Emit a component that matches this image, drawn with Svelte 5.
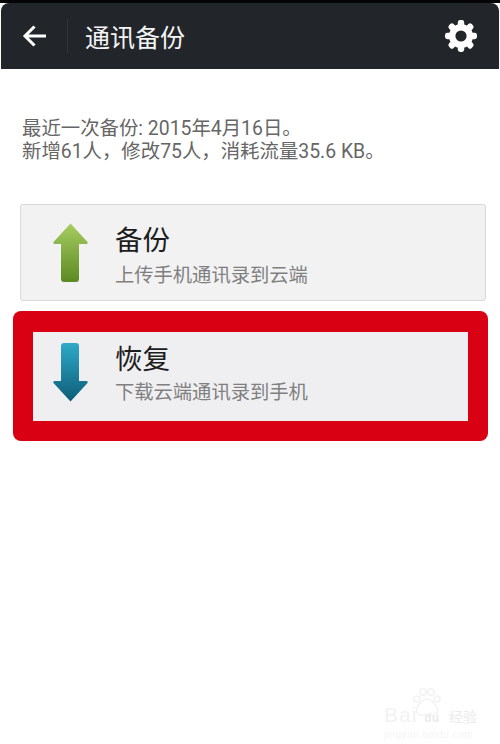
<script>
  const teeth = [0, 45, 90, 135, 180, 225, 270, 315];
  const toes = [
    [5, 14, 3],
    [11, 7, 3.2],
    [19, 7, 3.2],
    [25, 14, 3],
  ];
</script>

<div class="screen">
  <header class="bar">
    <div class="back">
      <svg width="26" height="24" viewBox="0 0 26 24" fill="none" stroke="#fff" stroke-width="3" aria-hidden="true">
        <path d="M24 12H3M12.500 2.500L3 12l9.500 9.500" />
      </svg>
    </div>
    <h1>通讯备份</h1>
    <svg class="gear" width="34" height="34" viewBox="0 0 34 34" aria-hidden="true">
      {#each teeth as a}
        <rect x="13.800" y="1" width="6.400" height="8" rx="2.400" fill="#fff" transform="rotate({a} 17 17)" />
      {/each}
      <circle cx="17" cy="17" r="8.800" fill="none" stroke="#fff" stroke-width="6.400" />
    </svg>
  </header>

  <main class="content">
    <p class="summary">
      最近一次备份: 2015年4月16日。<br />
      新增61人，修改75人，消耗流量35.6 KB。
    </p>

    <section class="card">
      <svg class="arrow" width="35" height="59" viewBox="0 0 35 59" aria-hidden="true">
        <defs>
          <linearGradient id="up" x1="0" y1="0" x2="0" y2="1">
            <stop offset="0" stop-color="#a6cd62" />
            <stop offset="1" stop-color="#5c8a22" />
          </linearGradient>
        </defs>
        <path
          d="M17.500 0.500 L34.500 19 Q35.500 21 33 21 H26 V56 Q26 59 23 59 H11 Q8 59 8 56 V21 H2 Q-0.500 21 0.500 19 Z"
          fill="url(#up)"
        />
      </svg>
      <div class="label">
        <h2>备份</h2>
        <p>上传手机通讯录到云端</p>
      </div>
    </section>

    <div class="highlight">
      <section class="card inner">
        <svg class="arrow" width="35" height="59" viewBox="0 0 35 59" aria-hidden="true">
          <defs>
            <linearGradient id="down" x1="0" y1="0" x2="0" y2="1">
              <stop offset="0" stop-color="#2eaac8" />
              <stop offset="1" stop-color="#0e5c78" />
            </linearGradient>
          </defs>
          <path
            d="M17.500 58.500 L34.500 40 Q35.500 38 33 38 H26 V3 Q26 0 23 0 H11 Q8 0 8 3 V38 H2 Q-0.500 38 0.500 40 Z"
            fill="url(#down)"
          />
        </svg>
        <div class="label">
          <h2>恢复</h2>
          <p>下载云端通讯录到手机</p>
        </div>
      </section>
    </div>
  </main>

  <div class="watermark">
    <svg class="paw" width="30" height="34" viewBox="0 0 30 34" fill="none" stroke="#f3f3f3" stroke-width="1.500" aria-hidden="true">
      {#each toes as [cx, cy, r]}
        <circle {cx} {cy} {r} />
      {/each}
      <path d="M15 14c5 0 8 5 10 9 2 5-2 8-6 7-3-1-5-1-8 0-4 1-8-2-6-7 2-4 5-9 10-9z" />
    </svg>
    <span class="brand"><span>Bai</span><b>du</b><span class="cn">经验</span></span>
    <span class="url">jingyan.baidu.com</span>
  </div>
</div>

<style>
  :global(body) {
    background: #fff;
  }

  .screen {
    position: relative;
    width: 500px;
    height: 744px;
    overflow: hidden;
    background: #fff;
    font-family: "Roboto", "Noto Sans CJK SC", sans-serif;
    border-top: 3px solid #050505;
    box-sizing: border-box;
  }

  .bar {
    display: flex;
    align-items: center;
    height: 66px;
    margin: 0 1px;
    padding-right: 21px;
    background: #22262b;
    border-radius: 8px 8px 0 0;
  }

  .back {
    display: flex;
    align-items: center;
    width: 67px;
    height: 34px;
    padding-left: 21px;
    box-sizing: border-box;
    border-right: 1px solid #2f343a;
  }

  h1 {
    flex: 1;
    margin: 0 0 0 17px;
    font-size: 25px;
    font-weight: 400;
    color: #f4f4f4;
  }

  .content {
    display: flex;
    flex-direction: column;
  }

  .summary {
    margin: 48px 0 0 22px;
    font-size: 19.4px;
    line-height: 23px;
    color: #666;
  }

  .card {
    display: flex;
    align-items: center;
    gap: 27px;
    width: 466px;
    height: 97px;
    margin: 41px 0 0 20px;
    padding-left: 32px;
    box-sizing: border-box;
    background: #f2f2f3;
    border: 1px solid #d9d9d9;
    border-radius: 3px;
  }

  .highlight {
    width: 475px;
    height: 130px;
    margin: 10px 0 0 13px;
    padding: 21px 20px 20px;
    box-sizing: border-box;
    background: #d80012;
    border-radius: 8px;
  }

  .inner {
    width: 435px;
    height: 89px;
    margin: 0;
    padding-left: 20px;
    background: #efeff2;
    border: none;
    border-radius: 0;
  }

  .arrow {
    flex: none;
  }

  .inner .arrow {
    margin-bottom: 8px;
  }

  .label {
    margin-top: 6px;
  }

  .inner .label {
    margin-top: 0;
    margin-bottom: 5px;
  }

  h2 {
    margin: 0;
    font-size: 27.5px;
    line-height: 34px;
    font-weight: 400;
    color: #1d1d1d;
  }

  .label p {
    margin: 6px 0 0;
    font-size: 19.3px;
    line-height: 24px;
    color: #808080;
  }

  .inner .label p {
    margin-top: 4px;
  }

  .watermark {
    position: absolute;
    left: 384px;
    bottom: 3px;
    width: 100px;
    display: flex;
    flex-direction: column;
    color: #f3f3f3;
    font-family: "Liberation Sans", "Noto Sans CJK SC", sans-serif;
  }

  .paw {
    position: absolute;
    left: 28px;
    top: -19px;
  }

  .brand {
    display: flex;
    align-items: baseline;
    font-size: 21px;
    line-height: 22px;
    letter-spacing: 1px;
  }

  .brand b {
    margin-left: 7px;
    font-size: 12px;
    letter-spacing: 0;
    color: #ebebeb;
  }

  .cn {
    margin-left: 10px;
    font-size: 14px;
    letter-spacing: 0;
    color: #ebebeb;
  }

  .url {
    font-size: 10px;
    line-height: 12px;
    letter-spacing: 0.5px;
    color: #f5f5f5;
  }
</style>
